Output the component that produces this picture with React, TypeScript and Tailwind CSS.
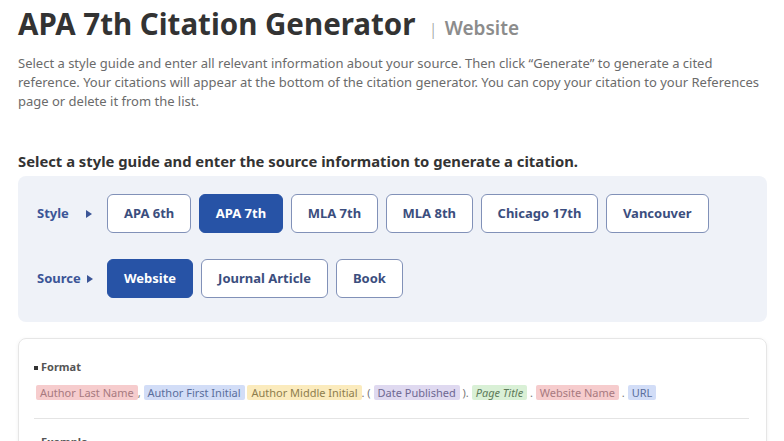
import React from "react";

const styles = ["APA 6th", "APA 7th", "MLA 7th", "MLA 8th", "Chicago 17th", "Vancouver"];
const sources = ["Website", "Journal Article", "Book"];

function Btn({ label, active }: { label: string; active?: boolean }) {
  return (
    <div
      className={
        active
          ? "h-[39px] px-[16px] flex items-center rounded-[6px] border border-[#2753a6] bg-[#2753a6] text-white text-[13px] font-bold"
          : "h-[39px] px-[16px] flex items-center rounded-[6px] border border-[#8191b8] bg-white text-[#3b4e7e] text-[13px] font-bold"
      }
    >
      {label}
    </div>
  );
}

function Arrow() {
  return (
    <svg width="6" height="8" viewBox="0 0 6 8" className="shrink-0">
      <path d="M0 0 L6 4 L0 8 Z" fill="#3b5597" />
    </svg>
  );
}

function Chip({ children, cls }: { children: React.ReactNode; cls: string }) {
  return <span className={"inline-block px-[4px] leading-[15px] rounded-[2px] " + cls}>{children}</span>;
}

export default function App() {
  return (
    <div className="w-[784px] h-[441px] overflow-hidden bg-white font-['Noto_Sans',sans-serif] px-[18px] pt-[6px]">
      <div className="flex items-baseline h-[36px]">
        <h1 className="text-[29.5px] leading-[36px] font-bold text-[#333333]">APA 7th Citation Generator</h1>
        <span className="ml-[13px] text-[17px] text-[#9a9a9a] font-light">|</span>
        <span className="ml-[7px] text-[19px] font-semibold text-[#8c8c8c]">Website</span>
      </div>
      <p className="mt-[12px] text-[13px] leading-[19px] text-[#6b6b6b]">
        Select a style guide and enter all relevant information about your source. Then click “Generate” to generate a cited
        <br />
        reference. Your citations will appear at the bottom of the citation generator. You can copy your citation to your References
        <br />
        page or delete it from the list.
      </p>
      <h2 className="mt-[40px] text-[14.8px] leading-[20px] font-bold text-[#333333]">
        Select a style guide and enter the source information to generate a citation.
      </h2>
      <div className="mt-[5px] w-[749px] rounded-[8px] bg-[#eff2f8] pl-[19px] pt-[18px] pb-[24px]">
        <div className="flex items-center">
          <div className="w-[70px] flex items-center text-[13px] font-bold text-[#3b5597]">
            <span>Style</span>
            <span className="ml-auto mr-[15px]"><Arrow /></span>
          </div>
          <div className="flex gap-[7.5px]">
            {styles.map((s) => (
              <Btn key={s} label={s} active={s === "APA 7th"} />
            ))}
          </div>
        </div>
        <div className="flex items-center mt-[26px]">
          <div className="w-[70px] flex items-center text-[13px] font-bold text-[#3b5597]">
            <span>Source</span>
            <span className="ml-[6px]"><Arrow /></span>
          </div>
          <div className="flex gap-[8px]">
            {sources.map((s) => (
              <Btn key={s} label={s} active={s === "Website"} />
            ))}
          </div>
        </div>
      </div>
      <div className="mt-[16px] w-[749px] rounded-[8px] border border-[#e6e6e6] shadow-[0_1px_4px_rgba(0,0,0,0.06)] pl-[15px] pr-[17px] pt-[21px]">
        <div className="flex items-center h-[15px] text-[11px] font-bold text-[#555555]">
          <span className="w-[4px] h-[4px] bg-[#333333] mr-[3px]" />
          <span>Format</span>
        </div>
        <div className="mt-[10px] ml-[2px] flex items-center h-[15px] text-[11px] leading-[15px] text-[#777777] whitespace-pre">
          <Chip cls="bg-[#f6cccd] text-[#a77a80]">Author Last Name</Chip>
          <span>, </span>
          <Chip cls="bg-[#d2ddf7] text-[#5a6e9c]">Author First Initial</Chip>
          <span> </span>
          <Chip cls="bg-[#fbebbd] text-[#8e7d4d]">Author Middle Initial</Chip>
          <span>. ( </span>
          <Chip cls="bg-[#dfd9f0] text-[#6e6892]">Date Published</Chip>
          <span> ). </span>
          <Chip cls="bg-[#d9f0d6] text-[#5e7b5a] italic">Page Title</Chip>
          <span> . </span>
          <Chip cls="bg-[#f6cccd] text-[#a77a80]">Website Name</Chip>
          <span> . </span>
          <Chip cls="bg-[#d2ddf7] text-[#5a6e9c]">URL</Chip>
        </div>
        <div className="mt-[18px] h-px bg-[#e4e4e4]" />
        <div className="mt-[16px] flex items-center h-[15px] text-[11px] font-bold text-[#555555]">
          <span className="w-[4px] h-[4px] bg-[#333333] mr-[3px]" />
          <span>Example</span>
        </div>
        <div className="h-[40px]" />
      </div>
    </div>
  );
}
